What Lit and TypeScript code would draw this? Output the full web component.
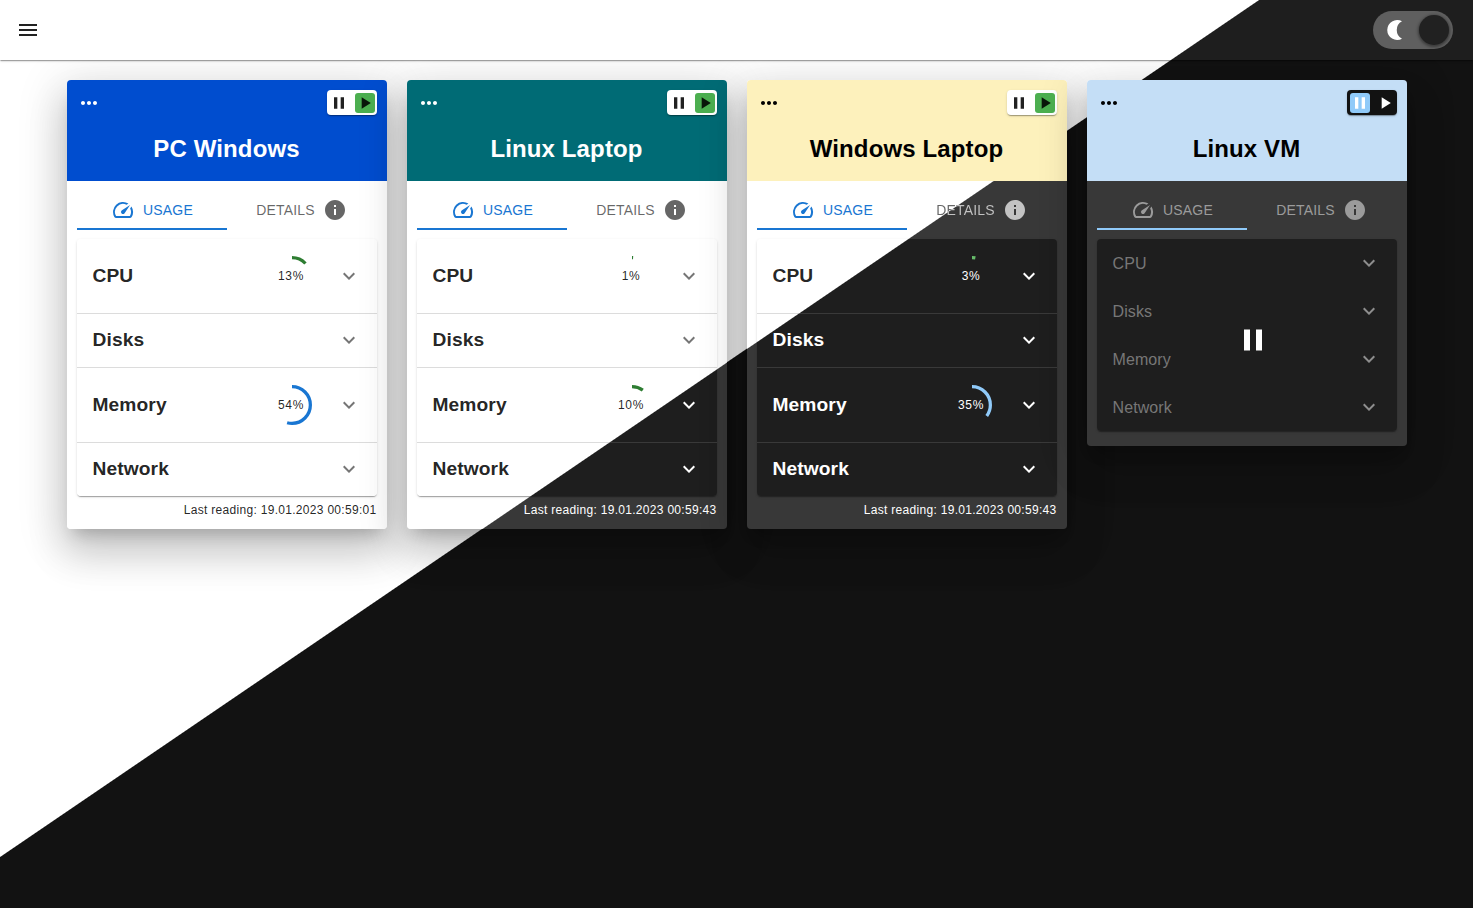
import { LitElement, html, css, svg, nothing } from "lit";
import { customElement, property } from "lit/decorators.js";
import { classMap } from "lit/directives/class-map.js";

type Tone = "light" | "dark";

interface Row {
  name: string;
  percent?: number;
  tone: Tone;
  chevron: Tone;
}

interface Device {
  name: string;
  scheme: string;
  paused: boolean;
  details: "light" | "split" | "off";
  reading?: string;
  footer?: Tone;
  rows: Row[];
}

const ICONS = {
  menu: svg`<path d="M3 18h18v-2H3v2zm0-5h18v-2H3v2zm0-7v2h18V6H3z"/>`,
  more: svg`<path d="M6 10c-1.1 0-2 .9-2 2s.9 2 2 2 2-.9 2-2-.9-2-2-2zm12 0c-1.1 0-2 .9-2 2s.9 2 2 2 2-.9 2-2-.9-2-2-2zm-6 0c-1.1 0-2 .9-2 2s.9 2 2 2 2-.9 2-2-.9-2-2-2z"/>`,
  pause: svg`<path d="M6 19h4V5H6v14zm8-14v14h4V5h-4z"/>`,
  play: svg`<path d="M8 5v14l11-7z"/>`,
  speed: svg`<path d="m20.38 8.57-1.23 1.85a8 8 0 0 1-.22 7.58H5.07A8 8 0 0 1 15.58 6.85l1.85-1.23A10 10 0 0 0 3.35 19a2 2 0 0 0 1.72 1h13.85a2 2 0 0 0 1.74-1 10 10 0 0 0-.27-10.44z"/><path d="M10.59 15.41a2 2 0 0 0 2.83 0l5.66-8.49-8.49 5.66a2 2 0 0 0 0 2.83z"/>`,
  info: svg`<path d="M12 2C6.48 2 2 6.48 2 12s4.48 10 10 10 10-4.48 10-10S17.52 2 12 2zm1 15h-2v-6h2v6zm0-8h-2V7h2v2z"/>`,
  expand: svg`<path d="M16.59 8.59 12 13.17 7.41 8.59 6 10l6 6 6-6z"/>`,
};

const icon = (name: keyof typeof ICONS, cls = "") =>
  html`<svg class="icon ${cls}" viewBox="0 0 24 24" aria-hidden="true">${ICONS[name]}</svg>`;

const DEVICES: Device[] = [
  {
    name: "PC Windows", scheme: "blue", paused: false, details: "light",
    reading: "19.01.2023 00:59:01", footer: "light",
    rows: [
      { name: "CPU", percent: 13, tone: "light", chevron: "light" },
      { name: "Disks", tone: "light", chevron: "light" },
      { name: "Memory", percent: 54, tone: "light", chevron: "light" },
      { name: "Network", tone: "light", chevron: "light" },
    ],
  },
  {
    name: "Linux Laptop", scheme: "teal", paused: false, details: "light",
    reading: "19.01.2023 00:59:43", footer: "dark",
    rows: [
      { name: "CPU", percent: 1, tone: "light", chevron: "light" },
      { name: "Disks", tone: "light", chevron: "light" },
      { name: "Memory", percent: 10, tone: "light", chevron: "dark" },
      { name: "Network", tone: "light", chevron: "dark" },
    ],
  },
  {
    name: "Windows Laptop", scheme: "yellow", paused: false, details: "split",
    reading: "19.01.2023 00:59:43", footer: "dark",
    rows: [
      { name: "CPU", percent: 3, tone: "light", chevron: "dark" },
      { name: "Disks", tone: "dark", chevron: "dark" },
      { name: "Memory", percent: 35, tone: "dark", chevron: "dark" },
      { name: "Network", tone: "dark", chevron: "dark" },
    ],
  },
  {
    name: "Linux VM", scheme: "sky", paused: true, details: "off",
    rows: ["CPU", "Disks", "Memory", "Network"].map((name) => ({ name, tone: "dark", chevron: "dark" })),
  },
];

/* The two themes meet on one viewport-wide diagonal, shared by every surface. */
const split = css`
  .split {
    background-image: linear-gradient(145.757deg, var(--l) 708px, var(--d) 709px);
    background-attachment: fixed;
  }
  .icon { width: 24px; height: 24px; fill: currentColor; display: block; flex: none; }
`;

@customElement("device-card")
export class DeviceCard extends LitElement {
  @property({ attribute: false }) device!: Device;

  static styles = [
    split,
    css`
      :host { display: block; width: 320px; }
      .card {
        --l: #fff; --d: #383838;
        position: relative;
        border-radius: 4px;
        box-shadow: 0 11px 15px -7px rgba(0,0,0,.2), 0 24px 38px 3px rgba(0,0,0,.14), 0 9px 46px 8px rgba(0,0,0,.12);
      }
      .head { height: 101px; box-sizing: border-box; padding: 10px 10px 0; border-radius: 4px 4px 0 0; }
      .blue { background: #004dcf; color: #fff; }
      .teal { background: #006b75; color: #fff; }
      .yellow { background: #fdf1bc; color: #000; }
      .sky { background: #c4def6; color: #000; }
      .bar { display: flex; justify-content: space-between; align-items: flex-start; }
      .more { padding-top: 1px; }
      .switch {
        display: flex; gap: 6px; padding: 3px 2px 2px; border-radius: 4px;
        background: #fff; color: rgba(0,0,0,.87);
        box-shadow: 0 2px 1px -1px rgba(0,0,0,.2), 0 1px 1px rgba(0,0,0,.14), 0 1px 3px rgba(0,0,0,.12);
      }
      .switch.off { background: #121212; color: #fff; padding-left: 3px; gap: 5px; }
      .switch .icon { width: 20px; height: 20px; border-radius: 3px; }
      .green { background: #4caf50; }
      .pale { background: #90caf9; }
      .title { margin: 18px 0 0; text-align: center; font-size: 24px; font-weight: 700; line-height: 32px; letter-spacing: .13px; }
      .body { padding: 9px 10px 0; }
      .tabs { display: grid; grid-template-columns: 1fr 1fr; height: 40px; }
      .tab {
        display: flex; align-items: center; justify-content: center; gap: 8px; box-sizing: border-box;
        border-top: 2px solid transparent; border-bottom: 2px solid transparent;
        font-size: 14px; letter-spacing: .15px; text-transform: uppercase; color: rgba(0,0,0,.6);
      }
      .tab.active { padding-left: 1px; color: #1976d2; border-bottom-color: #1976d2; }
      .paused .tab { color: #9b9b9b; }
      .paused .tab.active { border-bottom-color: #90caf9; }
      .split-text { --l: #666; --d: #c3c3c3; color: transparent; background-clip: text; -webkit-background-clip: text; }
      .pale-icon { color: #c3c3c3; }
      .rows {
        --l: #fff; --d: #1e1e1e; margin-top: 9px; border-radius: 4px;
        box-shadow: 0 2px 1px -1px rgba(0,0,0,.2), 0 1px 1px rgba(0,0,0,.14), 0 1px 3px rgba(0,0,0,.12);
      }
      .row { display: flex; align-items: center; box-sizing: border-box; padding: 0 16px 1px; height: 53px; }
      .row.tall { height: 74px; padding-bottom: 0; }
      .rule { --l: #dcdcdc; --d: #393939; height: 1px; }
      .name { flex: 1; font-size: 19.2px; font-weight: 700; letter-spacing: .1px; }
      .light { color: rgba(0,0,0,.87); }
      .dark { color: #fff; }
      .chev.light { color: rgba(0,0,0,.54); }
      .gauge { position: relative; width: 40px; height: 40px; margin-right: 25px; }
      .gauge svg { display: block; width: 40px; height: 40px; transform: rotate(-90deg); }
      .gauge circle { fill: none; stroke-width: 3.6; }
      .gauge span {
        position: absolute; inset: 0 1px 0 0; display: flex; align-items: center; justify-content: center;
        font-size: 12px; letter-spacing: .7px;
      }
      .foot { padding-top: 4px; height: 29px; text-align: right; font-size: 12px; line-height: 20px; letter-spacing: .3px; }
      .paused .row { height: 48px; padding-bottom: 0; }
      .paused .name { font-size: 16px; font-weight: 400; color: #777; padding-top: 1px; }
      .paused .chev { color: #8e8e8e; }
      .paused .body { padding-bottom: 15px; }
      .overlay { position: absolute; left: 148px; top: 242px; width: 36px; height: 36px; color: #fff; }
    `,
  ];

  private gauge(row: Row) {
    const value = row.percent ?? 0;
    const length = 2 * Math.PI * 20.2;
    const low = value < 30;
    const dark = this.device.scheme === "yellow";
    const stroke = dark ? (low ? "#66bb6a" : "#90caf9") : (low ? "#2e7d32" : "#1976d2");
    return html`<div class="gauge ${dark ? "dark" : "light"}">
      <svg viewBox="22 22 44 44">
        <circle cx="44" cy="44" r="20.2" stroke=${stroke}
          stroke-dasharray="${(length * value) / 100} ${length}"></circle>
      </svg>
      <span>${value}%</span>
    </div>`;
  }

  render() {
    const d = this.device;
    return html`<section class=${classMap({ card: true, split: true, paused: d.paused })}>
      <header class="head ${d.scheme}">
        <div class="bar">
          <div class="more">${icon("more")}</div>
          <div class="switch ${d.paused ? "off" : ""}">
            ${icon("pause", d.paused ? "pale" : "")}${icon("play", d.paused ? "" : "green")}
          </div>
        </div>
        <h2 class="title">${d.name}</h2>
      </header>
      <div class="body">
        <div class="tabs">
          <div class="tab active">${icon("speed")}<span>Usage</span></div>
          <div class="tab">
            <span class=${d.details === "split" ? "split split-text" : ""}>Details</span>
            ${icon("info", d.details === "split" ? "pale-icon" : "")}
          </div>
        </div>
        <div class="rows split">
          ${d.rows.map((row, i) => html`
            ${i && !d.paused ? html`<div class="rule split"></div>` : nothing}
            <div class="row ${row.percent !== undefined ? "tall" : ""}">
              <span class="name ${row.tone}">${row.name}</span>
              ${row.percent !== undefined ? this.gauge(row) : nothing}
              ${icon("expand", `chev ${row.chevron}`)}
            </div>`)}
        </div>
        ${d.reading ? html`<div class="foot ${d.footer}">Last reading: ${d.reading}</div>` : nothing}
      </div>
      ${d.paused ? icon("pause", "overlay") : nothing}
    </section>`;
  }
}

@customElement("app-root")
export class AppRoot extends LitElement {
  static styles = [
    split,
    css`
      :host { display: block; font-family: "Liberation Sans", Arial, sans-serif; }
      .page { --l: #fff; --d: #121212; height: 100vh; overflow: hidden; }
      .appbar {
        --l: #fff; --d: #1e1e1e; position: relative; z-index: 1; height: 60px; box-sizing: border-box;
        display: flex; align-items: center; justify-content: space-between; padding: 0 20px 0 16px;
        color: rgba(0,0,0,.87);
        box-shadow: 0 2px 1px -1px rgba(0,0,0,.2), 0 1px 1px rgba(0,0,0,.14), 0 1px 3px rgba(0,0,0,.12);
      }
      .toggle {
        width: 80px; height: 38px; border-radius: 19px; box-sizing: border-box; padding: 0 4px 0 11px;
        background: #5f5f5f; display: flex; align-items: center; justify-content: space-between;
      }
      .moon { width: 20px; height: 20px; fill: #fff; display: block; }
      .knob { width: 30px; height: 30px; border-radius: 50%; background: #212121; box-shadow: 0 1px 3px 1px rgba(0,0,0,.4); }
      .cards { display: flex; justify-content: center; align-items: flex-start; gap: 20px; padding-top: 20px; }
    `,
  ];

  render() {
    return html`<div class="page split">
      <div class="appbar split">
        ${icon("menu")}
        <div class="toggle">
          <svg class="moon" viewBox="0 0 20 20"><path d="M18 1.2A10 10 0 1 0 18 18.8A10 10 0 0 1 18 1.2z"/></svg>
          <div class="knob"></div>
        </div>
      </div>
      <main class="cards">
        ${DEVICES.map((d) => html`<device-card .device=${d}></device-card>`)}
      </main>
    </div>`;
  }
}
